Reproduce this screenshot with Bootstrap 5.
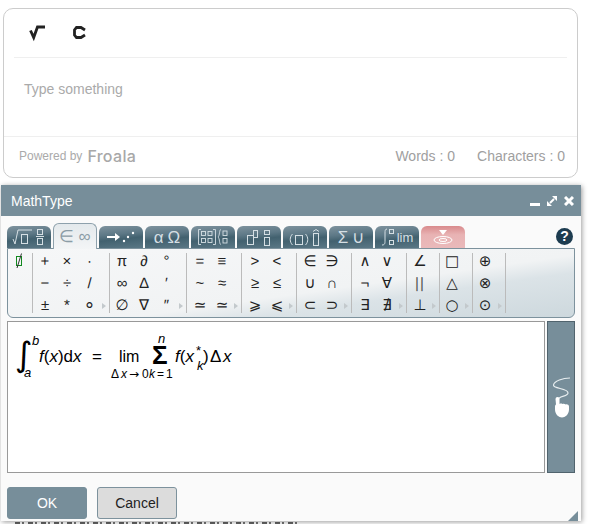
<!DOCTYPE html>
<html lang="en">
<head>
<meta charset="utf-8">
<title>MathType</title>
<link href="https://cdn.jsdelivr.net/npm/bootstrap@5.3.0/dist/css/bootstrap.min.css" rel="stylesheet">
<style>
html,body{height:524px;overflow:hidden;background:#fff}
body{font-family:"Liberation Sans",Arial,sans-serif;position:relative}
.page-wrap{padding:8px 12px 0 3px}
.fr-box{height:170px;border:1px solid #ccc;border-radius:10px;background:#fff}
.fr-tools{height:49px;margin:0 10px;border-bottom:1px solid #efefef;padding-left:15px;gap:25px}
.fr-tool{width:18px;height:18px}
.fr-body{height:79px;padding:22px 0 0 20px;color:#aaa;font-size:14px;line-height:18px;border-bottom:1px solid #efefef}
.fr-foot{height:40px;padding:0 12px 2px 15px;color:#999}
.fr-pow{font-size:12px;color:#aaa}
.fr-logo{font-family:Inter,sans-serif;font-size:16px;font-weight:500;color:#a8a8a8;letter-spacing:.3px;margin-left:5px;line-height:1}
.fr-count{font-size:14px;color:#a0a0a0;gap:22px}
.under-strip{position:absolute;left:15px;top:522px;width:285px;height:2px;background:repeating-linear-gradient(90deg,#666 0 5px,transparent 5px 7px,#777 7px 9px,transparent 9px 13px)}
.mt-win{position:absolute;left:1px;top:185px;width:580px;height:336px;background:#fafafa;box-shadow:1px 1px 5px rgba(0,0,0,.4)}
.mt-head{height:31px;background:#778e9a;color:#fff;padding:1px 7px 0 10px;font-size:14px}
.mt-ctl{width:10px;height:10px;margin-left:7px}
.mt-body{padding:10px 6px 0}
.mt-tabs{height:22px;gap:2px}
.mt-tab{width:44px;height:22px;border-radius:6px 6px 0 0;background:linear-gradient(174deg,#7f939e 0,#5d7886 38%,#42616f 58%,#5a7785 100%);color:#d5dfe4;display:flex;align-items:center;justify-content:center;font-size:17px;line-height:1;gap:4px}
.mt-tab.is-on{height:26px;margin-top:-3px;position:relative;z-index:1;background:linear-gradient(#e4e9ec,#f3f5f6);border:1px solid #8ea1ac;border-bottom:0;color:#8b9ca6}
.mt-tab.is-red{background:linear-gradient(#d98a8c 0,#e8b3b4 40%,#eab9ba 100%);color:#fff}
.mt-tab.tab-lim{gap:2px}
.mt-tab .lim-txt{font-size:13px}
.mt-help{width:17px;height:17px;border-radius:50%;background:#1d3c50;color:#fff;font-size:14px;font-weight:700;line-height:17px;text-align:center;margin-left:auto;margin-top:2px;margin-right:2px}
.mt-panel{height:70px;width:568px;border:1px solid #7d929d;border-radius:0 0 6px 6px;background:linear-gradient(172deg,#f6f7f8 0,#f1f3f4 58%,#dbe3e7 70%,#cdd8dd 100%);padding:4px 0 0 0}
.mt-grp{height:60px;border-right:1px solid #bbb;display:grid;grid-template-rows:repeat(3,22px);align-content:center;justify-items:center;align-items:center;color:#222;font-size:15px;line-height:1;position:relative;text-rendering:geometricPrecision}
.g1{width:25px;grid-template-columns:1fr;justify-items:start;padding-left:7px}
.g3{width:77px;grid-template-columns:22px 22px 23px;padding-left:1px}
.g2{width:55px;grid-template-columns:22px 22px;justify-content:start;padding-left:2px}
.ga{width:33px;grid-template-columns:22px;padding-left:2px}
.gb{width:33px;grid-template-columns:22px;padding-left:1px}
.mt-grp::after{content:"";position:absolute;right:3px;bottom:4px;border-left:4px solid #c3c9cc;border-top:3px solid transparent;border-bottom:3px solid transparent}
.g1::after{display:none}
.sym-big{font-size:19px}
.sym-shape{font-family:"DejaVu Sans",sans-serif;font-size:15px}
.sym-par{color:#555;letter-spacing:1px}
.mt-work{height:152px;margin-top:3px;gap:2px}
.mt-input{width:538px;border:1px solid #999;background:#fff}
.mt-hand{width:28px;background:#778e9a;border:1px solid #50636d;display:flex;align-items:center;justify-content:center}
.mt-foot{margin-top:14px;gap:10px}
.mt-btn{width:80px;height:32px;border-radius:3px;font-size:14px;padding:0}
.mt-ok{background:#778e9a;border:1px solid #778e9a;color:#fff}
.mt-cancel{background:#dcdcdc;border:1px solid #7d929d;color:#222}
.mt-grip{position:absolute;right:3px;bottom:0;width:10px;height:10px}
svg text{font-family:"Liberation Sans",Arial,sans-serif}
svg text.int-sign{font-family:"DejaVu Sans",sans-serif}
</style>
</head>
<body>
<div class="page-wrap">
  <div class="fr-box d-flex flex-column">
    <div class="fr-tools d-flex align-items-center">
      <svg class="fr-tool" viewBox="0 0 18 18" fill="none" stroke="#222" stroke-width="2.800"><path d="M1.500 6.500 4.700 13.500 8.500 3H16"/></svg>
      <svg class="fr-tool" viewBox="0 0 18 18" fill="none" stroke="#222" stroke-width="2.800"><path d="M13 6 9 3.500H4.500L2.500 6v5l2 2.500H9l4-2.500"/></svg>
    </div>
    <div class="fr-body">Type something</div>
    <div class="fr-foot d-flex align-items-center justify-content-between">
      <div class="d-flex align-items-center"><span class="fr-pow">Powered by</span><span class="fr-logo">Froala</span></div>
      <div class="fr-count d-flex"><span>Words : 0</span><span>Characters : 0</span></div>
    </div>
  </div>
</div>
<div class="under-strip" aria-hidden="true"></div>
<div class="mt-win d-flex flex-column">
  <div class="mt-head d-flex align-items-center">
    <span class="me-auto">MathType</span>
    <svg class="mt-ctl" viewBox="0 0 10 10"><rect x="0" y="7" width="10" height="3" fill="#fff"/></svg>
    <svg class="mt-ctl" viewBox="0 0 10 10" fill="#fff"><path d="M5 0h5v5zM5 10H0V5z"/><path d="M3 7 7 3" stroke="#fff" stroke-width="2"/></svg>
    <svg class="mt-ctl" viewBox="0 0 10 10" stroke="#fff" stroke-width="3"><path d="M1 1l8 8M9 1l-8 8"/></svg>
  </div>
  <div class="mt-body flex-grow-1">
    <div class="mt-tabs d-flex">
      <div class="mt-tab"><svg width="34" height="18" viewBox="0 0 34 18" fill="none" stroke="currentColor"><path d="M1 11l2 5 3-14h14"/><rect x="9.500" y="6.500" width="6" height="9"/><rect x="25.500" y="1.500" width="5" height="5"/><path d="M24 8.500h8"/><rect x="25.500" y="10.500" width="5" height="6"/></svg></div>
      <div class="mt-tab is-on"><span>∈</span><span>∞</span></div>
      <div class="mt-tab"><svg width="30" height="14" viewBox="0 0 30 14" fill="#fff"><path d="M1 6h8V3l5 4-5 4V8H1z"/><circle cx="18" cy="11" r="1.200"/><circle cx="22" cy="7" r="1.200"/><circle cx="27" cy="3" r="1.200"/></svg></div>
      <div class="mt-tab"><span>α</span><span>Ω</span></div>
      <div class="mt-tab"><svg width="30" height="18" viewBox="0 0 30 18" fill="none" stroke="currentColor" stroke-width=".9"><path d="M3 1.500H.5v15H3M15 1.500h2.500v15H15"/><rect x="3.500" y="3.500" width="4" height="4"/><rect x="10" y="3.500" width="4" height="4"/><rect x="3.500" y="10.500" width="4" height="4"/><rect x="10" y="10.500" width="4" height="4"/><path d="M23 1.500c-2 0-1 6-3 7.500 2 1.500 1 7.500 3 7.500"/><rect x="25" y="3" width="4" height="4.500"/><rect x="25" y="10.500" width="4" height="4.500"/></svg></div>
      <div class="mt-tab"><svg width="24" height="17" viewBox="0 0 24 17" fill="none" stroke="currentColor"><rect x=".5" y="6.500" width="6" height="9"/><rect x="6.500" y="1.500" width="4" height="7"/><rect x="17.500" y="1.500" width="5" height="4"/><rect x="17.500" y="8.500" width="5" height="8"/></svg></div>
      <div class="mt-tab"><svg width="32" height="18" viewBox="0 0 32 18" fill="none" stroke="currentColor"><path d="M3.500 6c-3 3-3 8 0 11M16.500 6c3 3 3 8 0 11"/><rect x="6.500" y="7.500" width="7" height="9"/><path d="M24 3.500l3-2 3 2"/><rect x="24.500" y="5.500" width="5" height="12"/></svg></div>
      <div class="mt-tab"><span>Σ</span><span>∪</span></div>
      <div class="mt-tab tab-lim"><svg width="14" height="18" viewBox="0 0 14 18" fill="none" stroke="currentColor"><path d="M6 1C4 1 4 3 4 5v8c0 2 0 4-3 4"/><rect x="8.500" y="1.500" width="4" height="4"/><rect x="8.500" y="12.500" width="4" height="4"/></svg><span class="lim-txt">lim</span></div>
      <div class="mt-tab is-red"><svg width="20" height="16" viewBox="0 0 20 16" fill="none" stroke="#fff"><ellipse cx="10" cy="11" rx="9" ry="3.500"/><ellipse cx="10" cy="11" rx="4" ry="1.500"/><path d="M6 1h8l-4 5z" fill="#fff" stroke="none"/></svg></div>
      <div class="mt-help">?</div>
    </div>
    <div class="mt-panel d-flex">
      <div class="mt-grp g1"><svg width="8" height="16" viewBox="0 0 8 16" fill="none"><rect x="1.500" y="3.500" width="5" height="9" stroke="#12891f"/><path d="M6.500 .5 2 15" stroke="#333"/></svg></div>
      <div class="mt-grp g3"><span>+</span><span>×</span><span>·</span><span>−</span><span>÷</span><span>/</span><span>±</span><span>*</span><span class="sym-big">∘</span></div>
      <div class="mt-grp g3"><span>π</span><span>∂</span><span>°</span><span>∞</span><span>∆</span><span>′</span><span>∅</span><span>∇</span><span>″</span></div>
      <div class="mt-grp g2"><span>=</span><span>≡</span><span>~</span><span>≈</span><span>≃</span><span>≃</span></div>
      <div class="mt-grp g2"><span>&gt;</span><span>&lt;</span><span>≥</span><span>≤</span><span>⩾</span><span>⩽</span></div>
      <div class="mt-grp g2"><span>∈</span><span>∋</span><span>∪</span><span>∩</span><span>⊂</span><span>⊃</span></div>
      <div class="mt-grp g2"><span>∧</span><span>∨</span><span>¬</span><span>∀</span><span>∃</span><span>∄</span></div>
      <div class="mt-grp ga"><span>∠</span><span class="sym-par">||</span><span>⊥</span></div>
      <div class="mt-grp gb"><span class="sym-shape">□</span><span class="sym-shape">△</span><span class="sym-shape">○</span></div>
      <div class="mt-grp gb"><span>⊕</span><span>⊗</span><span>⊙</span></div>
    </div>
    <div class="mt-work d-flex">
      <div class="mt-input">
        <svg width="536" height="150" viewBox="8 322 536 150" font-size="17">
          <text class="int-sign" x="15" y="366" font-size="34">∫</text>
          <text x="32" y="345" font-style="italic" font-size="13">b</text>
          <text x="24" y="377" font-style="italic" font-size="13">a</text>
          <text x="39" y="362"><tspan font-style="italic">f</tspan>(<tspan font-style="italic">x</tspan>)d<tspan font-style="italic">x</tspan></text>
          <text x="92" y="362">=</text>
          <text x="119" y="362" font-size="16">lim</text>
          <text x="111" y="378" font-size="12">Δ</text>
          <text x="121" y="378" font-size="12" font-style="italic">x</text>
          <text class="int-sign" x="129" y="378" font-size="12">→</text>
          <text x="142" y="378" font-size="12">0</text>
          <text x="149" y="378" font-size="12" font-style="italic">k</text>
          <text x="157" y="378" font-size="12">=</text>
          <text x="166" y="378" font-size="12">1</text>
          <text x="152" y="364" font-size="26" font-weight="700">Σ</text>
          <text x="158" y="343" font-size="13" font-style="italic">n</text>
          <text x="175" y="362"><tspan font-style="italic">f</tspan>(<tspan font-style="italic">x</tspan></text>
          <text x="196" y="355" font-size="13">*</text>
          <text x="197" y="370" font-size="13" font-style="italic">k</text>
          <text x="203" y="362">)</text>
          <text x="210" y="362">Δ</text>
          <text x="223" y="362" font-style="italic">x</text>
        </svg>
      </div>
      <div class="mt-hand">
        <svg width="20" height="44" viewBox="0 0 20 44" fill="none"><path d="M19 3C12 3 3 6 2.500 10 2 14 17 13 17 18 17 22 7 20 6 26" stroke="#e8eef0" stroke-width="1.200"/><path d="M4.500 24a2 2 0 0 1 4 0v5c1-.6 2-.6 3 0 1-.6 2.500-.3 3 .4 1-.6 3.500 0 3.500 2v3c0 5-4 8-7 8s-7-3-7-8v-3c0-1.500 1-2 1-2z" fill="#fff"/></svg>
      </div>
    </div>
    <div class="mt-foot d-flex">
      <button type="button" class="btn mt-btn mt-ok">OK</button>
      <button type="button" class="btn mt-btn mt-cancel">Cancel</button>
    </div>
  </div>
  <svg class="mt-grip" viewBox="0 0 10 10"><path d="M10 0v10H0z" fill="#778e9a"/></svg>
</div>
<script src="https://cdn.jsdelivr.net/npm/bootstrap@5.3.0/dist/js/bootstrap.bundle.min.js"></script>
</body>
</html>
